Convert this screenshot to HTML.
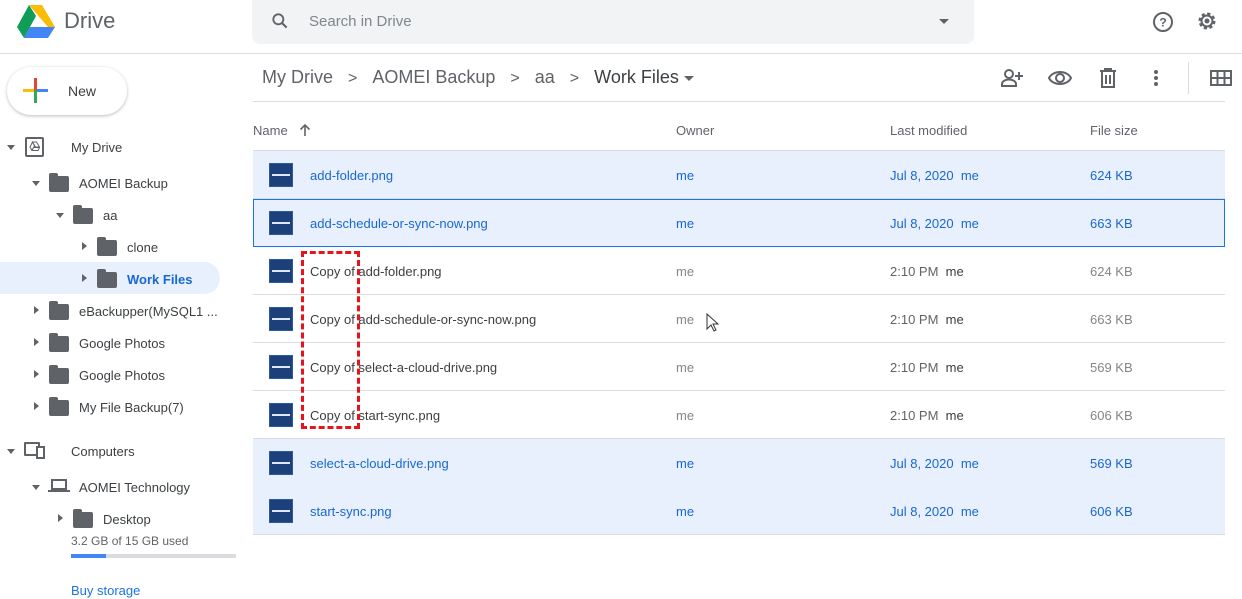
<!DOCTYPE html>
<html><head><style>
*{margin:0;padding:0;box-sizing:border-box}
body{width:1242px;height:599px;overflow:hidden;background:#fff;font-family:"Liberation Sans",Arial,sans-serif;color:#3c4043;position:relative}
.a{position:absolute}
.t{font-size:13px;color:#3c4043;white-space:nowrap}
.fold{width:20px;height:16px;background:#5f6368;border-radius:2px;position:absolute}
.fold:before{content:"";position:absolute;left:0;top:-3px;width:9px;height:4px;background:#5f6368;border-radius:2px 2px 0 0}
.tri{position:absolute;width:0;height:0;border-left:4px solid transparent;border-right:4px solid transparent;border-top:5px solid #5f6368}
.trr{position:absolute;width:0;height:0;border-top:4px solid transparent;border-bottom:4px solid transparent;border-left:5px solid #5f6368}
.row{position:absolute;left:253px;width:972px;height:48px;border-bottom:1px solid #dadce0}
.row .th{position:absolute;left:16px;top:12px;width:24px;height:24px;background:#1d3f7a;border:1px solid #2a5aa0}
.row .th:after{content:"";position:absolute;left:2px;right:2px;top:10px;height:2px;background:#dfe8ff}
.row .n{position:absolute;left:57px;top:17px;font-size:13px}
.row .o{position:absolute;left:423px;top:17px;font-size:13px}
.row .d{position:absolute;left:637px;top:17px;font-size:13px}
.row .s{position:absolute;left:837px;top:17px;font-size:13px}
.sel{background:#e8f0fe}
.sel .n,.sel .o,.sel .d,.sel .s{color:#1967d2}
.pl .n{color:#3c4043}.pl .o,.pl .s{color:#80868b}.pl .d{color:#5f6368}
</style></head><body>
<svg class="a" style="left:17px;top:5px" width="38" height="33" viewBox="0 0 38 33">
<polygon points="12,0 25,0 38,22 31,22" fill="#fbbc04"/>
<polygon points="12,0 19,11 7,33 0,22" fill="#0f9d58"/>
<polygon points="7,33 13,22 38,22 31,33" fill="#4285f4"/>
</svg>
<div class="a" style="left:64px;top:8px;font-size:22px;color:#5f6368">Drive</div>
<div class="a" style="left:252px;top:0;width:722px;height:44px;background:#f1f3f4;border-radius:0 0 8px 8px"></div>
<svg class="a" style="left:270px;top:11px" width="20" height="20" viewBox="0 0 24 24"><circle cx="10" cy="10" r="6" fill="none" stroke="#5f6368" stroke-width="2.2"/><line x1="14.5" y1="14.5" x2="20" y2="20" stroke="#5f6368" stroke-width="2.5"/></svg>
<div class="a" style="left:309px;top:13px;font-size:15px;color:#80868b">Search in Drive</div>
<div class="a" style="left:939px;top:19px;border-left:5px solid transparent;border-right:5px solid transparent;border-top:5px solid #5f6368"></div>
<svg class="a" style="left:1151px;top:10px" width="24" height="24" viewBox="0 0 24 24"><circle cx="12" cy="12" r="9" fill="none" stroke="#5f6368" stroke-width="2"/><text x="12" y="16.5" font-size="12" font-weight="bold" text-anchor="middle" fill="#5f6368" font-family="Liberation Sans">?</text></svg>
<svg class="a" style="left:1195px;top:9px" width="24" height="24" viewBox="0 0 24 24"><circle cx="12" cy="12" r="7" fill="none" stroke="#5f6368" stroke-width="3" stroke-dasharray="3 2.5"/><circle cx="12" cy="12" r="5.5" fill="none" stroke="#5f6368" stroke-width="2"/><circle cx="12" cy="12" r="2.5" fill="#5f6368"/></svg>
<div class="a" style="left:0;top:53px;width:1242px;height:1px;background:#dadce0"></div>
<div class="a" style="left:7px;top:67px;width:120px;height:48px;border-radius:24px;box-shadow:0 1px 3px rgba(60,64,67,.35);background:#fff"></div>
<div class="a" style="left:34px;top:78px;width:3px;height:12px;background:#ea4335"></div>
<div class="a" style="left:34px;top:90px;width:3px;height:13px;background:#34a853"></div>
<div class="a" style="left:23px;top:89px;width:11px;height:3px;background:#fbbc04"></div>
<div class="a" style="left:37px;top:89px;width:11px;height:3px;background:#4285f4"></div>
<div class="a" style="left:68px;top:83px;font-size:14px;color:#3c4043">New</div>
<div class="a" style="left:0;top:262px;width:220px;height:32px;background:#e8f0fe;border-radius:0 16px 16px 0"></div>
<div class="tri" style="left:7px;top:145px"></div>
<div class="a" style="left:25px;top:137px;width:19px;height:20px;border:2px solid #5f6368;border-radius:2px"></div>
<svg class="a" style="left:29px;top:141px" width="11" height="10" viewBox="0 0 11 10"><path d="M3.5 1h4l3 5h-4zM3.5 1L1 6l2 3.5 2.5-4.5zM3 9.5h6l1.5-3h-6z" fill="none" stroke="#5f6368" stroke-width="1"/></svg>
<div class="t a" style="left:71px;top:140px">My Drive</div>
<div class="tri" style="left:32px;top:181px"></div><div class="fold" style="left:49px;top:176px"></div><div class="t a" style="left:79px;top:176px">AOMEI Backup</div>
<div class="tri" style="left:56px;top:213px"></div><div class="fold" style="left:73px;top:208px"></div><div class="t a" style="left:103px;top:208px">aa</div>
<div class="trr" style="left:82px;top:242px"></div><div class="fold" style="left:97px;top:240px"></div><div class="t a" style="left:127px;top:240px">clone</div>
<div class="trr" style="left:82px;top:274px"></div><div class="fold" style="left:97px;top:272px"></div><div class="t a" style="left:127px;top:272px;color:#1967d2;font-weight:bold">Work Files</div>
<div class="trr" style="left:34px;top:306px"></div><div class="fold" style="left:49px;top:304px"></div><div class="t a" style="left:79px;top:304px">eBackupper(MySQL1 ...</div>
<div class="trr" style="left:34px;top:338px"></div><div class="fold" style="left:49px;top:336px"></div><div class="t a" style="left:79px;top:336px">Google Photos</div>
<div class="trr" style="left:34px;top:370px"></div><div class="fold" style="left:49px;top:368px"></div><div class="t a" style="left:79px;top:368px">Google Photos</div>
<div class="trr" style="left:34px;top:402px"></div><div class="fold" style="left:49px;top:400px"></div><div class="t a" style="left:79px;top:400px">My File Backup(7)</div>
<div class="tri" style="left:7px;top:449px"></div>
<div class="a" style="left:24px;top:442px;width:16px;height:14px;border:2px solid #5f6368;border-radius:1px"></div>
<div class="a" style="left:36px;top:446px;width:9px;height:13px;border:2px solid #5f6368;background:#fff"></div>
<div class="t a" style="left:71px;top:444px">Computers</div>
<div class="tri" style="left:32px;top:485px"></div>
<div class="a" style="left:51px;top:479px;width:16px;height:11px;border:2px solid #5f6368"></div><div class="a" style="left:48px;top:490px;width:22px;height:2px;background:#5f6368"></div>
<div class="t a" style="left:79px;top:480px">AOMEI Technology</div>
<div class="trr" style="left:58px;top:514px"></div><div class="fold" style="left:73px;top:512px"></div><div class="t a" style="left:103px;top:512px">Desktop</div>
<div class="a" style="left:71px;top:534px;font-size:12px;color:#5f6368">3.2 GB of 15 GB used</div>
<div class="a" style="left:71px;top:554px;width:165px;height:4px;background:#dadce0"></div>
<div class="a" style="left:71px;top:554px;width:35px;height:4px;background:#4285f4"></div>
<div class="a" style="left:71px;top:583px;font-size:13px;color:#1a73e8">Buy storage</div>
<div class="a" style="left:262px;top:67px;font-size:18px;color:#5f6368;white-space:nowrap">My Drive&nbsp;&nbsp;&nbsp;<span style="font-size:16px">&gt;</span>&nbsp;&nbsp;&nbsp;AOMEI Backup&nbsp;&nbsp;&nbsp;<span style="font-size:16px">&gt;</span>&nbsp;&nbsp;&nbsp;aa&nbsp;&nbsp;&nbsp;<span style="font-size:16px">&gt;</span>&nbsp;&nbsp;&nbsp;<span style="color:#3c4043">Work Files</span></div>
<div class="a" style="left:684px;top:76px;border-left:5px solid transparent;border-right:5px solid transparent;border-top:5px solid #5f6368"></div>
<svg class="a" style="left:1000px;top:67px" width="26" height="22" viewBox="0 0 26 22"><circle cx="9" cy="7" r="4" fill="none" stroke="#5f6368" stroke-width="2"/><path d="M2 19 v-2 c0-3 4-4.5 7-4.5 s7 1.5 7 4.5 v2 z" fill="none" stroke="#5f6368" stroke-width="2"/><path d="M19 5v8M15 9h8" stroke="#5f6368" stroke-width="2"/></svg>
<svg class="a" style="left:1048px;top:68px" width="24" height="20" viewBox="0 0 24 20"><path d="M1 10 C5 2 19 2 23 10 C19 18 5 18 1 10Z" fill="none" stroke="#5f6368" stroke-width="2"/><circle cx="12" cy="10" r="4" fill="none" stroke="#5f6368" stroke-width="2"/></svg>
<svg class="a" style="left:1099px;top:67px" width="18" height="22" viewBox="0 0 18 22"><path d="M1 4h16M6 4V2h6v2M3 5v15h12V5" fill="none" stroke="#5f6368" stroke-width="2"/><path d="M7 8v9M11 8v9" stroke="#5f6368" stroke-width="2"/></svg>
<div class="a" style="left:1154px;top:70px;width:4px;height:4px;border-radius:2px;background:#5f6368;box-shadow:0 6px 0 #5f6368,0 12px 0 #5f6368"></div>
<div class="a" style="left:1188px;top:62px;width:1px;height:32px;background:#dadce0"></div>
<svg class="a" style="left:1210px;top:70px" width="22" height="16" viewBox="0 0 22 16"><rect x="1" y="1" width="20" height="14" fill="none" stroke="#5f6368" stroke-width="2"/><path d="M1 8h20M7.5 1v14M14.5 1v14" stroke="#5f6368" stroke-width="2"/></svg>
<div class="a" style="left:253px;top:101px;width:972px;height:1px;background:#dadce0"></div>
<div class="a" style="left:253px;top:123px;font-size:13px;color:#5f6368">Name</div>
<svg class="a" style="left:298px;top:123px" width="14" height="14" viewBox="0 0 14 14"><path d="M7 13V2M2.5 6.5L7 2l4.5 4.5" fill="none" stroke="#5f6368" stroke-width="1.6"/></svg>
<div class="a" style="left:676px;top:123px;font-size:13px;color:#5f6368">Owner</div>
<div class="a" style="left:890px;top:123px;font-size:13px;color:#5f6368">Last modified</div>
<div class="a" style="left:1090px;top:123px;font-size:13px;color:#5f6368">File size</div>
<div class="a" style="left:253px;top:150px;width:972px;height:1px;background:#dadce0"></div>
<div class="row sel" style="top:151px"><div class="th"></div><div class="n">add-folder.png</div><div class="o">me</div><div class="d">Jul 8, 2020&nbsp;&nbsp;me</div><div class="s">624 KB</div></div>
<div class="row sel" style="top:199px;border:1px solid #1a73e8"><div class="th" style="left:15px;top:11px"></div><div class="n" style="left:56px;top:16px">add-schedule-or-sync-now.png</div><div class="o" style="left:422px;top:16px">me</div><div class="d" style="left:636px;top:16px">Jul 8, 2020&nbsp;&nbsp;me</div><div class="s" style="left:836px;top:16px">663 KB</div></div>
<div class="row pl" style="top:247px"><div class="th"></div><div class="n">Copy of add-folder.png</div><div class="o">me</div><div class="d">2:10 PM&nbsp;&nbsp;<span style="color:#3c4043">me</span></div><div class="s">624 KB</div></div>
<div class="row pl" style="top:295px"><div class="th"></div><div class="n">Copy of add-schedule-or-sync-now.png</div><div class="o">me</div><div class="d">2:10 PM&nbsp;&nbsp;<span style="color:#3c4043">me</span></div><div class="s">663 KB</div></div>
<div class="row pl" style="top:343px"><div class="th"></div><div class="n">Copy of select-a-cloud-drive.png</div><div class="o">me</div><div class="d">2:10 PM&nbsp;&nbsp;<span style="color:#3c4043">me</span></div><div class="s">569 KB</div></div>
<div class="row pl" style="top:391px"><div class="th"></div><div class="n">Copy of start-sync.png</div><div class="o">me</div><div class="d">2:10 PM&nbsp;&nbsp;<span style="color:#3c4043">me</span></div><div class="s">606 KB</div></div>
<div class="row sel" style="top:439px;border-bottom:none;height:48px"><div class="th"></div><div class="n">select-a-cloud-drive.png</div><div class="o">me</div><div class="d">Jul 8, 2020&nbsp;&nbsp;me</div><div class="s">569 KB</div></div>
<div class="row sel" style="top:487px"><div class="th"></div><div class="n">start-sync.png</div><div class="o">me</div><div class="d">Jul 8, 2020&nbsp;&nbsp;me</div><div class="s">606 KB</div></div>
<div class="a" style="left:301px;top:251px;width:59px;height:178px;border:3px dashed #e8131b"></div>
<svg class="a" style="left:706px;top:313px" width="14" height="20" viewBox="0 0 14 20"><path d="M1 1v15l4-4 3 6 2-1-3-6h5z" fill="#fff" stroke="#333" stroke-width="1"/></svg>
</body></html>
